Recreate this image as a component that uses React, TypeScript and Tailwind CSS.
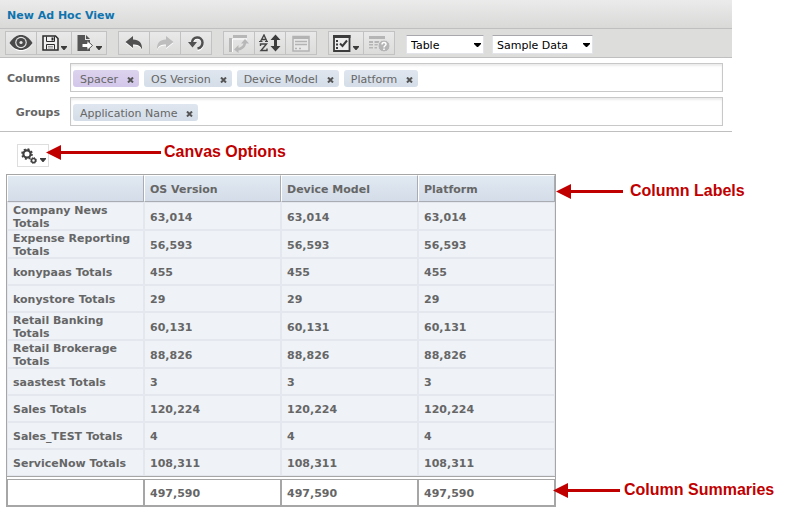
import React from "react";

const bodyFont = "font-['DejaVu_Sans',Verdana,sans-serif]";
const noteFont = "font-['Liberation_Sans',Arial,sans-serif]";

function Caret() {
  return (
    <svg width="6" height="4" viewBox="0 0 6 4" className="mb-1 self-end" aria-hidden="true">
      <path d="M0 0H6V1L3.5 4H2.5L0 1Z" fill="#3c3c3c" />
    </svg>
  );
}

function EyeIcon() {
  return (
    <svg width="24" height="18" viewBox="0 0 24 18" aria-hidden="true">
      <path d="M0.5 10C4 4 8 1.5 12 1.5S20 4 23.5 10C20 15 16 17.200 12 17.200S4 15 0.5 10Z" fill="#fff" />
      <path d="M0.5 9C4 3.5 8 1 12 1S20 3.5 23.5 9C20 14 16 16 12 16S4 14 0.5 9Z" fill="#4a4a4a" />
      <circle cx="12" cy="8.5" r="5.8" fill="#e4e4e4" />
      <circle cx="12" cy="8.5" r="4.600" fill="#4a4a4a" />
      <circle cx="12" cy="8.5" r="1.600" fill="#e4e4e4" />
    </svg>
  );
}

function SaveIcon() {
  return (
    <svg width="17" height="16" viewBox="0 0 17 16" aria-hidden="true">
      <path d="M1 1H13.500L16 3.500V15H1Z" fill="#efefef" stroke="#2b2b2b" strokeWidth="1.500" />
      <path d="M4.500 1.500V6.500H12.500V1.500M4.500 14.500V9.500H12.500V14.500" fill="none" stroke="#2b2b2b" />
      <path d="M9.500 2.500h2v3h-2z" fill="#2b2b2b" />
      <path d="M6 11.500H11M6 13H11" stroke="#999" />
    </svg>
  );
}

function ExportIcon() {
  return (
    <svg width="17" height="16" viewBox="0 0 17 16" aria-hidden="true">
      <path d="M0.500 0H8V5H13V16H0.500Z" fill="#555" />
      <path d="M9 0L13 4H9Z" fill="#555" />
      <path d="M5 8.500H10V5.500L15.500 10.500L10 15.500V12.500H5Z" fill="#fff" stroke="#555" />
    </svg>
  );
}

function UndoIcon() {
  return (
    <svg width="18" height="15" viewBox="0 0 18 15" aria-hidden="true">
      <path d="M0.500 7L8 1V4.500C14 4.500 17.500 8 17 14.500C15.500 10.500 12.500 9.500 8 9.500V13Z" fill="#fff" />
      <path d="M0.500 6L8 0V3.500C14 3.500 17.500 7 17 13.500C15.500 9.500 12.500 8.500 8 8.500V12Z" fill="#505050" />
    </svg>
  );
}

function RedoIcon() {
  return (
    <svg width="18" height="15" viewBox="0 0 18 15" aria-hidden="true">
      <path d="M17.500 7L10 1V4.500C4 4.500 0.500 8 1 14.500C2.500 10.500 5.500 9.500 10 9.500V13Z" fill="#fff" />
      <path d="M17.500 6L10 0V3.500C4 3.500 0.500 7 1 13.500C2.500 9.500 5.500 8.500 10 8.500V12Z" fill="#bdbdbd" />
    </svg>
  );
}

function RevertIcon() {
  return (
    <svg width="17" height="16" viewBox="0 0 17 16" aria-hidden="true">
      <path d="M4 8C4 1 14 0.500 14.500 7.500C14.500 11 12.500 13.500 9.500 14" fill="none" stroke="#fff" strokeWidth="2.500" transform="translate(0 1)" />
      <path d="M4 8C4 1 14 0.500 14.500 7.500C14.500 11 12.500 13 9.500 13.500" fill="none" stroke="#505050" strokeWidth="2.500" />
      <path d="M0 7H9L4.500 12.500Z" fill="#505050" />
    </svg>
  );
}

function SwitchIcon() {
  return (
    <svg width="20" height="19" viewBox="0 0 20 19" aria-hidden="true">
      <path d="M4 1H18V4H4ZM0 4H3V18H0Z" fill="#b7b7b7" />
      <path d="M4 5H18M3.500 5V18" stroke="#fff" />
      <path d="M8 15.500C13 15 15.500 13 16 8.500" fill="none" stroke="#b7b7b7" strokeWidth="2.500" />
      <path d="M12 9.500L16 5L20 9.500ZM9.500 11V19L5 15.500Z" fill="#b7b7b7" />
    </svg>
  );
}

function SortIcon() {
  return (
    <svg width="22" height="18" viewBox="0 0 22 18" aria-hidden="true">
      <g fill="none" stroke="#444">
        <path d="M1.500 7.500L5 1L8 7.500M3 5.500H7" strokeWidth="1.400" />
        <path d="M0 7.500H3.500M6 7.500H9" />
        <path d="M1.500 12V10H7.500L2 16.500H8V14.500" strokeWidth="1.400" />
      </g>
      <path d="M16.500 0.500L21.500 6H18V12H21.500L16.500 17.500L11.500 12H15V6H11.500Z" fill="#3d3d3d" />
    </svg>
  );
}

function InputControlsIcon() {
  return (
    <svg width="18" height="17" viewBox="0 0 18 17" aria-hidden="true">
      <path d="M1 1.500H17V16H1Z" fill="#e8e8e8" stroke="#b3b3b3" strokeWidth="1.500" />
      <path d="M1 1H17V4H1Z" fill="#b3b3b3" />
      <path d="M3 6.500H15M3 9.500H15M3 13.500H5M7 13.500H9" stroke="#b3b3b3" strokeWidth="1.500" />
    </svg>
  );
}

function OptionsIcon() {
  return (
    <svg width="18" height="17" viewBox="0 0 18 17" aria-hidden="true">
      <path d="M1 1H16.500V16H1Z" fill="#eee" stroke="#3c3c3c" strokeWidth="1.800" />
      <path d="M0 0H17.500V3H0Z" fill="#3c3c3c" />
      <path d="M3 5h2v2H3zM3 8.500h2v2H3zM3 12h2v2H3z" fill="#3c3c3c" />
      <path d="M7 8.500L9.500 11L14 5.500" fill="none" stroke="#3c3c3c" strokeWidth="2" />
    </svg>
  );
}

function QueryIcon() {
  return (
    <svg width="21" height="17" viewBox="0 0 21 17" aria-hidden="true">
      <path d="M0 1H16V4H0ZM0 6H4V8H0ZM5.500 6H10V8H5.500ZM11.500 6H16V8H11.500ZM0 9H4V10.500H0ZM5.500 9H9V10.500H5.500ZM0 12H4V13.500H0ZM5.500 12H8V13.500H5.500Z" fill="#b5b5b5" />
      <circle cx="15" cy="11" r="6" fill="#b5b5b5" stroke="#e2e2e2" />
      <path d="M13 9.500C13 6.800 17 7 17 9.300C17 10.800 15 10.800 15 12.500M15 13.500V15" fill="none" stroke="#fff" strokeWidth="1.500" />
    </svg>
  );
}

function GearsIcon() {
  return (
    <svg width="17" height="16" viewBox="0 0 17 16" aria-hidden="true">
      <g fill="none" stroke="#3f3f3f">
        <circle cx="6" cy="6" r="3.600" strokeWidth="2.200" />
        <circle cx="6" cy="6" r="5" strokeWidth="1.600" strokeDasharray="2 1.930" />
        <circle cx="12.500" cy="12.500" r="2" strokeWidth="1.500" />
        <circle cx="12.500" cy="12.500" r="3" strokeWidth="1" strokeDasharray="1.200 1.160" />
      </g>
    </svg>
  );
}

type Tool = { label: string; icon: React.ReactNode; menu?: boolean; disabled?: boolean };

const toolGroups: Tool[][] = [
  [
    { label: "Preview", icon: <EyeIcon /> },
    { label: "Save", icon: <SaveIcon />, menu: true },
    { label: "Export", icon: <ExportIcon />, menu: true },
  ],
  [
    { label: "Undo", icon: <UndoIcon /> },
    { label: "Redo", icon: <RedoIcon />, disabled: true },
    { label: "Revert", icon: <RevertIcon /> },
  ],
  [
    { label: "Switch group", icon: <SwitchIcon />, disabled: true },
    { label: "Sort", icon: <SortIcon /> },
    { label: "Input controls", icon: <InputControlsIcon />, disabled: true },
  ],
  [
    { label: "Page options", icon: <OptionsIcon />, menu: true },
    { label: "View query", icon: <QueryIcon />, disabled: true },
  ],
];

function ToolGroup({ tools }: { tools: Tool[] }) {
  return (
    <div className="flex h-6 shrink-0 border-l border-[#c2c2c2]">
      {tools.map((t) => (
        <button
          key={t.label}
          type="button"
          aria-label={t.label}
          disabled={t.disabled}
          className={
            "flex items-center justify-center gap-[2px] border-y border-r border-[#c2c2c2] bg-linear-to-b from-[#e9e9e9] to-[#dcdcdb] " +
            (t.menu ? "w-[35px]" : "w-[31px]")
          }
        >
          {t.icon}
          {t.menu && <Caret />}
        </button>
      ))}
    </div>
  );
}

function Picker({ label, value, width }: { label: string; value: string; width: string }) {
  return (
    <div className={"relative shrink-0 " + width}>
      <select
        aria-label={label}
        defaultValue={value}
        className="block h-[19px] w-full appearance-none border border-[#e3e3ea] border-t-[#a8a8ac] bg-white pt-[2px] pl-1 text-[11px] leading-[15px] text-black"
      >
        <option>{value}</option>
      </select>
      <svg width="7" height="4" viewBox="0 0 7 4" className="pointer-events-none absolute top-2 right-[3px]" aria-hidden="true">
        <path d="M0 0H7V1L4 4H3L0 1Z" fill="#000" />
      </svg>
    </div>
  );
}

function Chip({ name, spacer }: { name: string; spacer?: boolean }) {
  return (
    <span
      className={
        "flex h-[17px] items-center gap-[9px] rounded-[3px] pt-[2px] pr-[5px] pl-[7px] " +
        (spacer ? "bg-linear-to-b from-[#dcd3ee] to-[#d3c7ea]" : "bg-linear-to-b from-[#dfe6ef] to-[#d4dde8]")
      }
    >
      {name}
      <button type="button" aria-label={"Remove " + name}>
        <svg width="7" height="6" viewBox="0 0 7 6" aria-hidden="true">
          <path d="M1 0.500L6 5.500M6 0.500L1 5.500" stroke="#555" strokeWidth="2" />
        </svg>
      </button>
    </span>
  );
}

function Shelf({ label, children }: { label: string; children: React.ReactNode }) {
  return (
    <div className="flex items-center gap-[10px]">
      <h2 className="w-[60px] pt-[2px] text-right font-bold">{label}</h2>
      <div className="flex h-[29px] flex-1 items-center gap-[5px] border border-[#c8c8c8] bg-white px-[2px] pt-[2px] shadow-[inset_0_2px_2px_#ececec]">
        {children}
      </div>
    </div>
  );
}

function Arrow({ className }: { className: string }) {
  return (
    <div className={"flex items-center " + className} aria-hidden="true">
      <svg width="15" height="15" viewBox="0 0 15 15" className="shrink-0">
        <path d="M0 7.500L15 0V15Z" fill="#c00000" />
      </svg>
      <div className="h-[3px] flex-1 bg-[#c00000]" />
    </div>
  );
}

const headers = ["OS Version", "Device Model", "Platform"];
const rows: [string, string][] = [
  ["Company News Totals", "63,014"],
  ["Expense Reporting Totals", "56,593"],
  ["konypaas Totals", "455"],
  ["konystore Totals", "29"],
  ["Retail Banking Totals", "60,131"],
  ["Retail Brokerage Totals", "88,826"],
  ["saastest Totals", "3"],
  ["Sales Totals", "120,224"],
  ["Sales_TEST Totals", "4"],
  ["ServiceNow Totals", "108,311"],
];

const headCell = "border border-t-white border-l-white border-r-[#a9adb3] border-b-[#a9adb3] bg-linear-to-b from-[#e1e9f2] to-[#d3dce8] p-0 text-left";
const bodyCell = "border border-[#e4e8ee] bg-[#eff3f8] p-0 text-left";
const sumCell = "border border-[#a6a6a6] bg-white p-0 text-left";

function DataTable() {
  return (
    <table className="w-[550px] shrink-0 table-fixed border-separate border-spacing-0 border border-[#a6a6a6] text-[11px] leading-[13px] font-bold">
      <thead>
        <tr className="h-[27px]">
          <td className={headCell} />
          {headers.map((h) => (
            <th key={h} scope="col" className={headCell}>
              <div className="pt-[2px] pl-[5px]">{h}</div>
            </th>
          ))}
        </tr>
      </thead>
      <tbody>
        {rows.map(([name, value]) => (
          <tr key={name} className="h-[27px]">
            <th scope="row" className={bodyCell}>
              <div className="-mb-px pt-px pr-2 pl-[5px]">{name}</div>
            </th>
            {headers.map((h) => (
              <td key={h} className={bodyCell}>
                <div className="-mb-px pt-px pl-[5px]">{value}</div>
              </td>
            ))}
          </tr>
        ))}
      </tbody>
      <tfoot>
        <tr className="h-[3px]">
          <td colSpan={4} className="border-t border-[#a6a6a6] bg-white p-0" />
        </tr>
        <tr className="h-[27px]">
          <td className={sumCell} />
          {headers.map((h) => (
            <td key={h} className={sumCell}>
              <div className="-mb-px pt-px pl-[5px]">497,590</div>
            </td>
          ))}
        </tr>
      </tfoot>
    </table>
  );
}

export default function App() {
  return (
    <main className={"min-h-screen bg-white text-[11px] leading-[13px] text-[#666] " + bodyFont}>
      <div className="mr-[55px]">
        <header className="flex h-[29px] items-center border-b border-[#bfbfbf] bg-linear-to-b from-[#ebebeb] to-[#d9d9d8] pl-[7px]">
          <h1 className="pt-[2px] font-bold text-[#0f74ae]">New Ad Hoc View</h1>
        </header>
        <div role="toolbar" className="flex h-[29px] items-center border-b border-[#bfbfbf] bg-[#dddddc] pl-[5px]">
          <div className="flex gap-[11px]">
            {toolGroups.map((g) => (
              <ToolGroup key={g[0].label} tools={g} />
            ))}
          </div>
          <div className="ml-[11px] flex gap-2 pt-[3px]">
            <Picker label="View type" value="Table" width="w-[78px]" />
            <Picker label="Data level" value="Sample Data" width="w-[101px]" />
          </div>
        </div>
        <section className="flex flex-col gap-[5px] border-b border-[#bfbfbf] py-[5px] pr-[9px]">
          <Shelf label="Columns">
            <Chip name="Spacer" spacer />
            <Chip name="OS Version" />
            <Chip name="Device Model" />
            <Chip name="Platform" />
          </Shelf>
          <Shelf label="Groups">
            <Chip name="Application Name" />
          </Shelf>
        </section>
      </div>

      <div className="flex items-start pt-[10px] pb-[7px] pl-[17px]">
        <button
          type="button"
          aria-label="Canvas options"
          className="mt-[2px] flex h-[23px] w-8 items-center justify-center gap-[2px] border border-[#dedede] bg-white"
        >
          <GearsIcon />
          <Caret />
        </button>
        <div className="-ml-[3px] flex h-5 items-center gap-[3px]">
          <Arrow className="w-[115px]" />
          <p className={"text-[16px] leading-5 font-bold text-[#c00000] " + noteFont}>Canvas Options</p>
        </div>
      </div>

      <div className="flex pl-[6px]">
        <DataTable />
        <div className={"flex flex-col justify-between py-[7px] text-[16px] leading-5 font-bold whitespace-nowrap text-[#c00000] " + noteFont}>
          <div className="flex items-center gap-[7px]">
            <Arrow className="w-[67px]" />
            <p>Column Labels</p>
          </div>
          <div className="-ml-[3px] flex items-center gap-1">
            <Arrow className="w-[67px]" />
            <p>Column Summaries</p>
          </div>
        </div>
      </div>
    </main>
  );
}
